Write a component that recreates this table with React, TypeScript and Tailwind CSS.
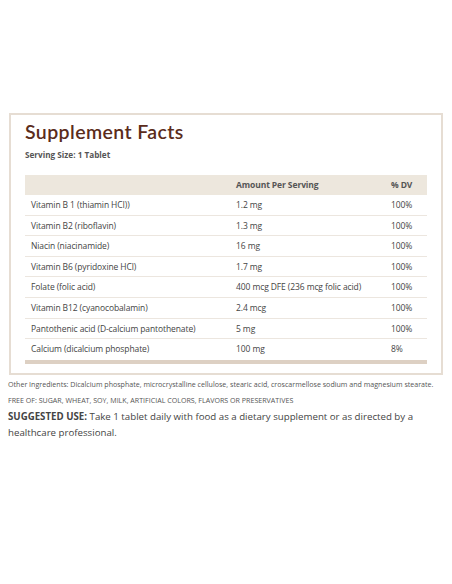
const rows = [
  ["Vitamin B 1 (thiamin HCI))", "1.2 mg", "100%"],
  ["Vitamin B2 (riboflavin)", "1.3 mg", "100%"],
  ["Niacin (niacinamide)", "16 mg", "100%"],
  ["Vitamin B6 (pyridoxine HCl)", "1.7 mg", "100%"],
  ["Folate (folic acid)", "400 mcg DFE (236 mcg folic acid)", "100%"],
  ["Vitamin B12 (cyanocobalamin)", "2.4 mcg", "100%"],
  ["Pantothenic acid (D-calcium pantothenate)", "5 mg", "100%"],
  ["Calcium (dicalcium phosphate)", "100 mg", "8%"],
];

export default function App() {
  return (
    <div className="min-h-[584px] w-[452px] bg-white pt-[113px] font-['Open_Sans',sans-serif] text-[#444]">
      <div className="mx-[9px] border-2 border-[#e6ddd3] px-[14px] pb-[9px] pt-[5px]">
        <h2 className="font-['Lato',sans-serif] text-[19.5px] font-semibold leading-[24px] tracking-[0.4px] text-[#5b2c1b]">
          Supplement Facts
        </h2>
        <p className="mt-[5px] text-[8.2px] font-bold leading-[12px] text-[#555]">Serving Size: 1 Tablet</p>
        <table className="mt-[14px] w-full border-collapse text-[8.5px] tracking-[-0.1px]">
          <thead>
            <tr className="bg-[#ede7dd] font-bold text-[#555]">
              <th className="w-[205px] px-[6px]"></th>
              <th className="w-[155px] px-[6px] py-0 text-left font-bold leading-[20px]">Amount Per Serving</th>
              <th className="px-[6px] text-left font-bold leading-[20px]">% DV</th>
            </tr>
          </thead>
          <tbody>
            {rows.map((r, i) => (
              <tr key={i} className={i < rows.length - 1 ? "border-b border-[#ece6df]" : ""}>
                <td className="px-[6px] py-0 leading-[19.6px]">{r[0]}</td>
                <td className="px-[6px] leading-[19.6px]">{r[1]}</td>
                <td className="px-[6px] leading-[19.6px]">{r[2]}</td>
              </tr>
            ))}
          </tbody>
        </table>
        <div className="mt-[1px] h-[4px] bg-[#ddd0c3]" />
      </div>
      <div className="pl-[8px] pr-[6px] pt-[1px] text-[#555]">
        <p className="whitespace-nowrap text-[7.1px] leading-[16.5px]">
          Other Ingredients: Dicalcium phosphate, microcrystalline cellulose, stearic acid, croscarmellose sodium and magnesium stearate.
        </p>
        <p className="whitespace-nowrap text-[7.1px] leading-[16.5px]">
          FREE OF: SUGAR, WHEAT, SOY, MILK, ARTIFICIAL COLORS, FLAVORS OR PRESERVATIVES
        </p>
        <p className="text-[9.7px] leading-[16.5px] text-[#444]">
          <span className="font-bold">SUGGESTED USE:</span> Take 1 tablet daily with food as a dietary supplement or as directed by a
          healthcare professional.
        </p>
      </div>
    </div>
  );
}
